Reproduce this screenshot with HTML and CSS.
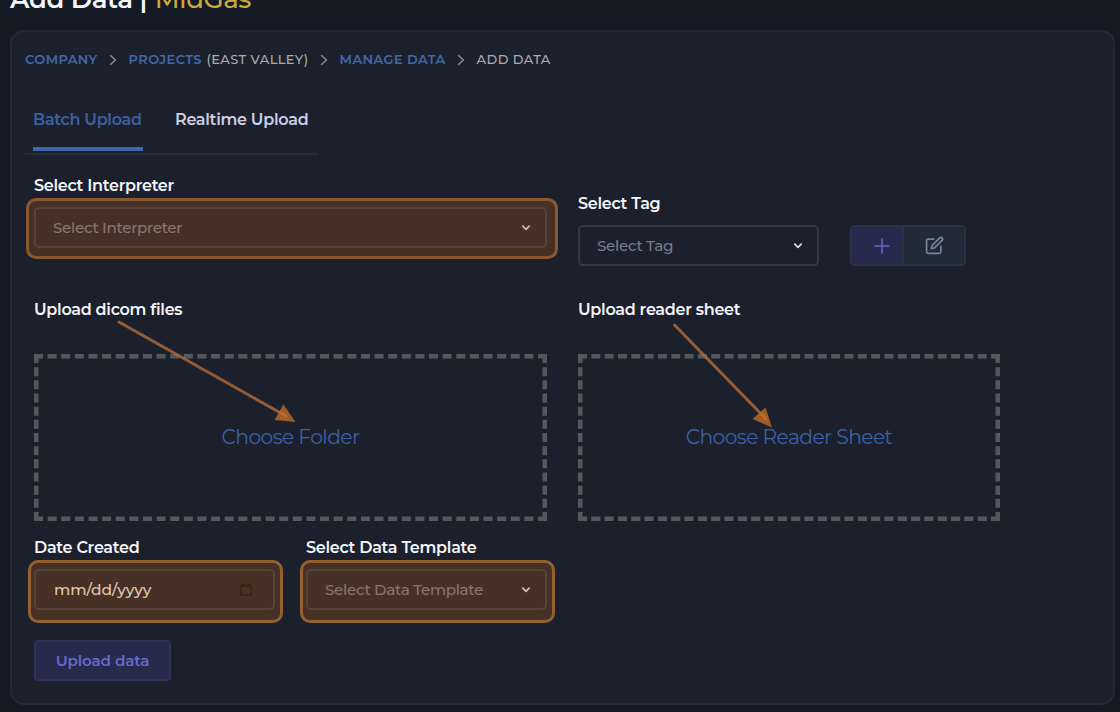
FILE: index.html
```
<!DOCTYPE html>
<html lang="en">
<head>
<meta charset="utf-8">
<title>Add Data</title>
<link rel="stylesheet" href="styles.css">
</head>
<body>
<h1 class="page-title"><span>Add Data |</span> <span class="project">MidGas</span></h1>
<main class="card">
  <nav class="breadcrumb">
    <a>COMPANY</a>
    <svg class="sep" viewBox="0 0 8 12"><path d="M1.2 1.2 6.4 6l-5.2 4.8"/></svg>
    <span class="crumb"><a>PROJECTS</a> <span>(EAST VALLEY)</span></span>
    <svg class="sep" viewBox="0 0 8 12"><path d="M1.2 1.2 6.4 6l-5.2 4.8"/></svg>
    <a>MANAGE DATA</a>
    <svg class="sep" viewBox="0 0 8 12"><path d="M1.2 1.2 6.4 6l-5.2 4.8"/></svg>
    <span>ADD DATA</span>
  </nav>
  <div class="tabs">
    <a class="tab active">Batch Upload</a>
    <a class="tab">Realtime Upload</a>
  </div>
  <form class="form">
    <div class="row">
      <div class="field">
        <label class="label">Select Interpreter</label>
        <div class="control"><span>Select Interpreter</span>
          <svg class="chev" viewBox="0 0 10 8"><path d="M1.800 2.200 5 5.300 8.200 2.200"/></svg>
          <i class="mark mark-wide"></i>
        </div>
      </div>
      <div class="field lowered">
        <label class="label">Select Tag</label>
        <div class="tag-line">
          <div class="control narrow"><span>Select Tag</span>
            <svg class="chev" viewBox="0 0 10 8"><path d="M1.800 2.200 5 5.300 8.200 2.200"/></svg>
          </div>
          <div class="group">
            <div class="btn-add"><svg width="16" height="16" viewBox="0 0 16 16"><path d="M8 .5v15M.5 8h15"/></svg></div>
            <div class="btn-edit"><svg width="19" height="19" viewBox="0 0 24 24"><path d="M11 4H4a2 2 0 0 0-2 2v14a2 2 0 0 0 2 2h14a2 2 0 0 0 2-2v-7"/><path d="M18.500 2.500a2.120 2.120 0 0 1 3 3L12 15l-4 1 1-4z"/></svg></div>
          </div>
        </div>
      </div>
    </div>
    <div class="row uploads">
      <div class="field">
        <label class="label">Upload dicom files</label>
        <div class="drop">
          <svg class="dashes" viewBox="0 0 513 167"><path class="left-h" d="M0 2.250H513M0 164.750H513"/><path class="v" d="M2.250 0V167M510.750 0V167"/></svg>
          <span>Choose Folder</span>
        </div>
      </div>
      <div class="field">
        <label class="label">Upload reader sheet</label>
        <div class="drop">
          <svg class="dashes" viewBox="0 0 422 167"><path class="right-h" d="M0 2.250H422M0 164.750H422"/><path class="v" d="M2.250 0V167M419.750 0V167"/></svg>
          <span>Choose Reader Sheet</span>
        </div>
      </div>
    </div>
    <div class="row meta">
      <div class="field">
        <label class="label">Date Created</label>
        <div class="control date"><span>mm/dd/yyyy</span>
          <svg class="cal" width="12" height="13" viewBox="0 0 12 13"><path d="M1 2.500h10v9.500H1z"/><path d="M1 3h10M3 .5v2M9 .5v2" class="thick"/></svg>
          <i class="mark mark-date"></i>
        </div>
      </div>
      <div class="field">
        <label class="label">Select Data Template</label>
        <div class="control"><span>Select Data Template</span>
          <svg class="chev" viewBox="0 0 10 8"><path d="M1.800 2.200 5 5.300 8.200 2.200"/></svg>
          <i class="mark mark-template"></i>
        </div>
      </div>
    </div>
    <div class="submit">Upload data</div>
  </form>
</main>
<svg class="arrows" viewBox="0 0 1120 712">
  <path class="shaft" d="M119 322 286 416M674.500 325 766 419"/>
  <path class="head" d="M283.500 404.500 295.500 422 274.500 420zM765.500 407.500 772 427.500 752.500 419z"/>
</svg>
</body>
</html>
```
FILE: styles.css
```
* { box-sizing: border-box; }
body { margin: 0; width: 1120px; height: 712px; overflow: hidden; background: #131a23; color: #f3f5f9; font-family: Montserrat, Inter, sans-serif; font-size: 16px; font-weight: 500; }
.page-title { display: flex; gap: 8px; height: 30px; margin: -17px 0 17px; padding-left: 10px; font-size: 26px; letter-spacing: -.4px; line-height: 32px; font-weight: 600; white-space: nowrap; }
.project { color: #cda93f; font-weight: 500; }
.card { width: 1105px; height: 675px; margin-left: 10px; border: 2px solid #212a37; border-radius: 14px; background: #1c202c; padding-left: 13px; }
.breadcrumb { display: flex; align-items: center; height: 54px; font-size: 13px; letter-spacing: .4px; color: #a9acb5; white-space: nowrap; }
.breadcrumb a { color: #4069ad; font-weight: 600; }
.sep { width: 8px; height: 12px; margin: 2px 11.500px 0; fill: none; stroke: #858a96; stroke-width: 1.500; }
.crumb { display: flex; gap: 4.500px; }
.tabs { display: flex; gap: 32px; width: 293px; height: 69px; padding-left: 8px; border-bottom: 2px solid #242c3a; font-size: 16px; letter-spacing: -.28px; white-space: nowrap; }
.tab { height: 65px; padding-top: 24px; line-height: 20px; color: #c9d0e6; font-weight: 600; }
.active { color: #3b619f; width: 110px; border-bottom: 4px solid #3b68ac; }
.form { padding: 21px 0 0 9px; }
.row { display: grid; grid-template-columns: 513px 422px; gap: 31px; height: 124px; }
.label { display: block; height: 20px; line-height: 20px; font-weight: 600; letter-spacing: -.28px; white-space: nowrap; }
.lowered { padding-top: 18px; }
.control { position: relative; display: flex; align-items: center; justify-content: space-between; height: 41px; margin-top: 11px; padding: 0 14px 0 17px; border: 2px solid #303a48; border-radius: 5px; color: #747c8d; font-size: 15.200px; letter-spacing: -.33px; white-space: nowrap; }
.narrow { width: 241px; margin: 0; }
.tag-line { display: flex; gap: 31px; margin-top: 11px; }
.chev { width: 10px; height: 8px; fill: none; stroke: #d7dae2; stroke-width: 1.800; stroke-linecap: round; stroke-linejoin: round; }
.group { display: flex; width: 116px; height: 41px; border: 2px solid #2a3344; border-radius: 5px; overflow: hidden; }
.group div { display: flex; align-items: center; justify-content: center; }
.btn-add { width: 52px; padding-left: 9px; background: #262a4d; border-right: 2px solid #2a3344; stroke: #6168c8; stroke-width: 1.600; }
.btn-edit { flex: 1; background: #202a38; fill: none; stroke: #76859b; stroke-width: 2.200; stroke-linejoin: round; stroke-linecap: round; }
.uploads { height: 238px; }
.drop { position: relative; height: 167px; margin-top: 34px; padding-bottom: 2px; display: flex; align-items: center; justify-content: center; color: #3a62a4; font-size: 20.300px; letter-spacing: -.6px; white-space: nowrap; font-weight: 400; }
.dashes { position: absolute; inset: 0; width: 100%; height: 100%; fill: none; stroke: #54585d; stroke-width: 4.500; }
.left-h { stroke-dasharray: 9 4.622; }
.right-h { stroke-dasharray: 9 4.323; }
.v { stroke-dasharray: 9 4.167; }
.meta { grid-template-columns: 241px 241px; height: 102px; }
.date { color: #ece8e2; padding-right: 21px; padding-left: 18px; font-size: 15.400px; letter-spacing: 0; }
.cal { fill: none; stroke: #0c0b0c; stroke-width: 1.500; }
.thick { stroke-width: 2.200; }
.mark { position: absolute; border: 3px solid #94602e; border-radius: 10px; background: rgba(200, 98, 20, .25); }
.mark-wide { inset: -11px -13px -13px -10px; border-color: #895a32; }
.mark-date { inset: -11px -10px -15px -8px; }
.mark-template { inset: -11px -10px -15px -8px; }
.submit { display: flex; align-items: center; justify-content: center; width: 137px; height: 41px; border: 2px solid #2c3357; border-radius: 4px; background: #262b4c; color: #636acb; font-size: 15.200px; letter-spacing: -.15px; font-weight: 600; }
.arrows { position: absolute; left: 0; top: 0; width: 1120px; height: 712px; pointer-events: none; }
.shaft { fill: none; stroke: #bd7038; stroke-opacity: .75; stroke-width: 3; stroke-linecap: round; }
.head { fill: #c87228; fill-opacity: .75; }
```
